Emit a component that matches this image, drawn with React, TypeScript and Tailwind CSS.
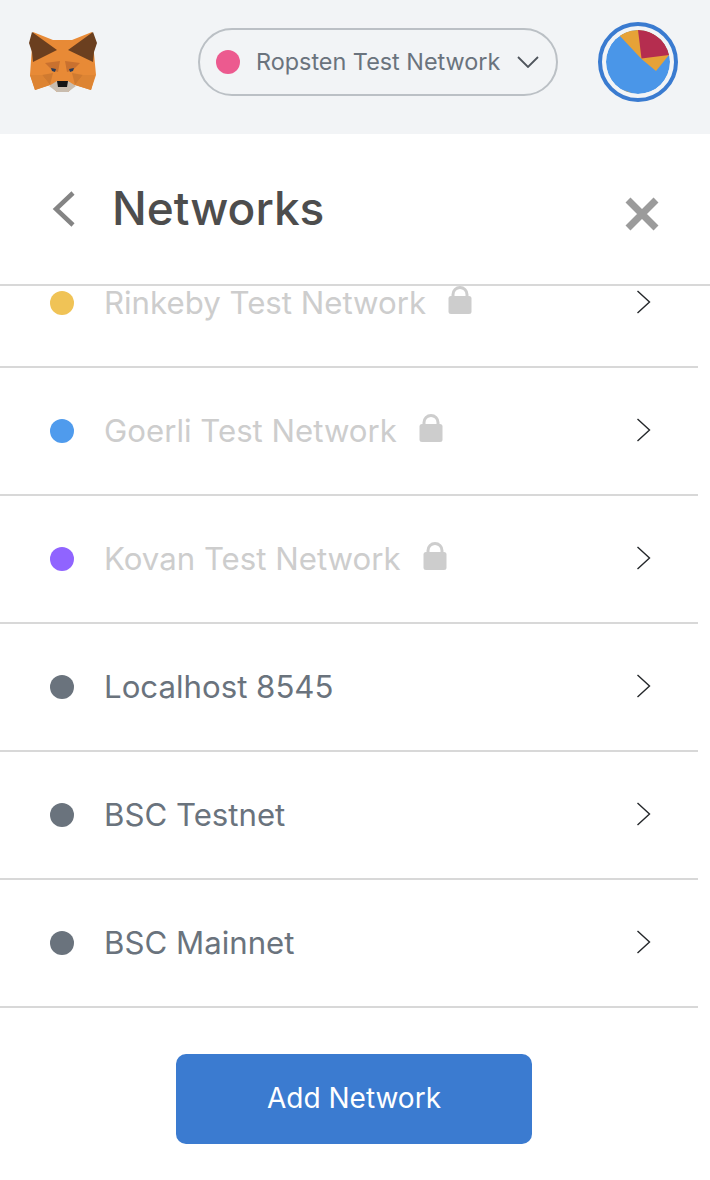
import React from "react";

function Fox() {
  return (
    <svg width="70" height="64" viewBox="28 30 70 64" className="block">
      <polygon points="33,32 53,40 72,40 92,32 96,75 91,90 75,85 68,92 57,92 50,85 35,90 30,75" fill="#e88a36" />
      <polygon points="32,32 57,50 33,62 32,52 29,43" fill="#6b3f1f" />
      <polygon points="93,32 68,50 93,62 94,52 97,43" fill="#6b3f1f" />
      <polygon points="45,63 60,61 58,72 52,70" fill="#c9712f" />
      <polygon points="80,63 65,61 67,72 73,70" fill="#c9712f" />
      <polygon points="42,75 53,73 50,85" fill="#cf7a30" />
      <polygon points="83,75 72,73 75,85" fill="#cf7a30" />
      <polygon points="30,75 42,75 50,85 35,90" fill="#dd8433" />
      <polygon points="95,75 83,75 75,85 91,90" fill="#dd8433" />
      <polygon points="49,86 57,81 68,81 76,86 68,92 57,92" fill="#c9bcae" />
      <polygon points="57,81 68,81 67,87 58,87" fill="#161616" />
      <polygon points="51,68 56,69 55,72 52,71" fill="#2b3a55" />
      <polygon points="74,68 69,69 70,72 73,71" fill="#2b3a55" />
    </svg>
  );
}

function Identicon() {
  return (
    <div className="w-[80px] h-[80px] rounded-full border-[4px] border-[#3a7bd0] flex items-center justify-center">
      <svg width="64" height="64" viewBox="0 0 64 64" className="block rounded-full">
        <circle cx="32" cy="32" r="32" fill="#4a96e8" />
        <path d="M13.5 5.5 L35.5 29 L50 41 L63 25 A32 32 0 0 0 32 0 A32 32 0 0 0 13.5 5.5Z" fill="#e6a237" />
        <path d="M32 0 L35.5 28.5 L63 25 A32 32 0 0 0 32 0Z" fill="#b52d4f" />
        <path d="M16 59.5 L27 63.5 A32 32 0 0 1 16 59.5Z" fill="#e6a237" />
      </svg>
    </div>
  );
}

function Chevron() {
  return (
    <svg width="16" height="24" viewBox="0 0 16 24" fill="none" className="block">
      <path d="M1.5 1 L13.5 12 L1.5 23" stroke="#24272a" strokeWidth="1.4" />
    </svg>
  );
}

function Lock() {
  return (
    <svg width="24" height="28" viewBox="0 0 24 28" className="block">
      <path d="M5 12 V8.5 a7 7 0 0 1 14 0 V12" fill="none" stroke="#cdcdcd" strokeWidth="3" />
      <rect x="0.5" y="10" width="23" height="18" rx="2.5" fill="#cdcdcd" />
    </svg>
  );
}

type Net = { name: string; color: string; locked?: boolean; first?: boolean };
const nets: Net[] = [
  { name: "Rinkeby Test Network", color: "#f0c356", locked: true, first: true },
  { name: "Goerli Test Network", color: "#4f9bed", locked: true },
  { name: "Kovan Test Network", color: "#9064ff", locked: true },
  { name: "Localhost 8545", color: "#6a737d" },
  { name: "BSC Testnet", color: "#6a737d" },
  { name: "BSC Mainnet", color: "#6a737d" },
];

function Row({ n }: { n: Net }) {
  return (
    <div className={`h-[128px] shrink-0 flex items-center border-b-2 border-[#d8d8d8] pl-[50px] pr-[46px] ${n.first ? "-mt-[46px]" : ""}`}>
      <span className="w-6 h-6 rounded-full shrink-0" style={{ backgroundColor: n.color }} />
      <span className={`ml-[30px] text-[31.2px] leading-[34px] whitespace-nowrap ${n.locked ? "text-[#cdcdcd]" : "text-[#6a737d]"}`}>{n.name}</span>
      {n.locked && <span className="ml-[22px] -mt-[6px]"><Lock /></span>}
      <span className="ml-auto -mt-[2px]"><Chevron /></span>
    </div>
  );
}

export default function App() {
  return (
    <div className="w-[710px] h-[1180px] bg-white overflow-hidden flex flex-col font-['Inter','Noto_Sans',sans-serif]">
      <header className="h-[134px] shrink-0 bg-[#f2f4f6] flex items-center pb-[10px] pl-[28px] pr-[32px]">
        <Fox />
        <div className="ml-[100px] w-[360px] h-[68px] rounded-[34px] border-2 border-[#bbc0c5] flex items-center pl-[16px] pr-[17px]">
          <span className="w-6 h-6 rounded-full bg-[#ec5a8f] shrink-0" />
          <span className="ml-[16px] text-[23.4px] leading-none text-[#6a737d] whitespace-nowrap">Ropsten Test Network</span>
          <svg width="22" height="12" viewBox="0 0 22 12" fill="none" className="ml-auto block">
            <path d="M1 1 L11 11 L21 1" stroke="#4f555c" strokeWidth="1.8" />
          </svg>
        </div>
        <div className="ml-auto"><Identicon /></div>
      </header>
      <div className="h-[152px] shrink-0 flex items-center border-b-2 border-[#d8d8d8] pl-[52px] pr-[51px]">
        <svg width="24" height="36" viewBox="0 0 24 36" fill="none" className="block">
          <path d="M21 2 L4 18 L21 34" stroke="#848484" strokeWidth="4.5" />
        </svg>
        <h1 className="ml-[36px] text-[46px] leading-none font-medium text-[#4d4d4d] -mt-[2px]">Networks</h1>
        <svg width="34" height="34" viewBox="0 0 34 34" className="ml-auto block mt-[9px]">
          <path d="M3 3 L31 31 M31 3 L3 31" stroke="#9b9b9b" strokeWidth="7" />
        </svg>
      </div>
      <div className="w-[698px] h-[722px] shrink-0 overflow-hidden flex flex-col">
        {nets.map((n) => <Row key={n.name} n={n} />)}
      </div>
      <div className="flex-1 flex justify-center pt-[46px] pr-[2px]">
        <button className="w-[356px] h-[90px] pb-[2px] rounded-[10px] bg-[#3b7bd0] text-white text-[28px]">Add Network</button>
      </div>
    </div>
  );
}
